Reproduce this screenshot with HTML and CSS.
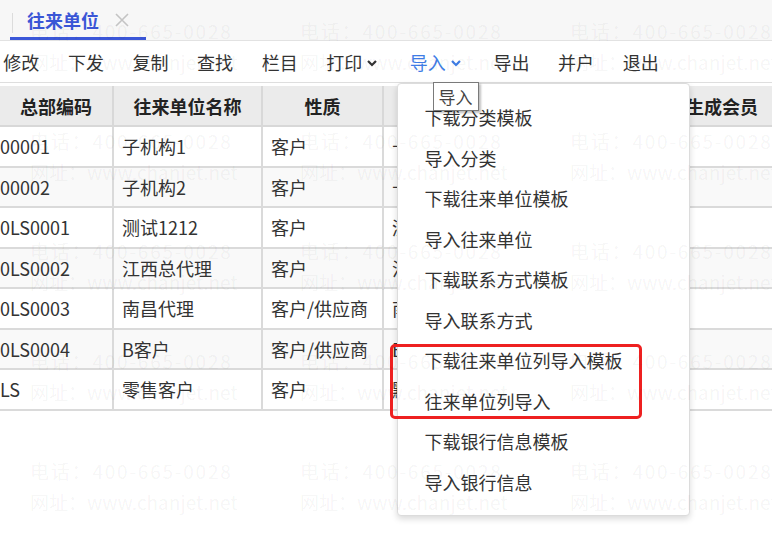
FILE: index.html
```html
<!DOCTYPE html>
<html lang="zh-CN">
<head>
    <meta charset="UTF-8">
    <title>往来单位</title>
    <link rel="stylesheet" href="styles.css">
</head>
<body>
    <div class="tabbar">
        <div class="tab">
            <span class="tab-title">往来单位</span>
            <svg class="tab-close" width="14" height="14" viewBox="0 0 14 14">
                <path d="M1 1 L13 13 M13 1 L1 13" stroke="#c4c4c4" stroke-width="1.6" fill="none"/>
            </svg>
        </div>
    </div>

    <div class="toolbar">
        <div class="tool first">修改</div>
        <div class="tool">下发</div>
        <div class="tool">复制</div>
        <div class="tool">查找</div>
        <div class="tool">栏目</div>
        <div class="tool">打印
            <svg class="chevron" width="12" height="8" viewBox="0 0 12 8">
                <polyline points="2,2 6,6 10,2" stroke="#333" stroke-width="2.2" fill="none"/>
            </svg>
        </div>
        <div class="tool active">导入
            <svg class="chevron" width="12" height="8" viewBox="0 0 12 8">
                <polyline points="2,2 6,6 10,2" stroke="#3f7de6" stroke-width="2.2" fill="none"/>
            </svg>
            <div class="tooltip">导入</div>
            <!-- import dropdown -->
            <div class="menu">
                <div class="menu-item">下载分类模板</div>
                <div class="menu-item">导入分类</div>
                <div class="menu-item">下载往来单位模板</div>
                <div class="menu-item">导入往来单位</div>
                <div class="menu-item">下载联系方式模板</div>
                <div class="menu-item">导入联系方式</div>
                <div class="menu-item">下载往来单位列导入模板</div>
                <div class="menu-item">往来单位列导入</div>
                <div class="menu-item">下载银行信息模板</div>
                <div class="menu-item">导入银行信息</div>
                <div class="highlight"></div>
            </div>
        </div>
        <div class="tool">导出</div>
        <div class="tool">并户</div>
        <div class="tool">退出</div>
    </div>

    <div class="grid-wrap">
        <table class="grid">
            <colgroup>
                <col class="c1"><col class="c2"><col class="c3"><col class="c4"><col class="c5">
            </colgroup>
            <thead>
                <tr>
                    <th>总部编码</th>
                    <th>往来单位名称</th>
                    <th>性质</th>
                    <th>所属分类</th>
                    <th>是否生成会员</th>
                </tr>
            </thead>
            <tbody>
                <tr><td class="code">00001</td><td>子机构1</td><td>客户</td><td>十堰</td><td></td></tr>
                <tr><td class="code">00002</td><td>子机构2</td><td>客户</td><td>十堰</td><td></td></tr>
                <tr><td class="code">0LS0001</td><td>测试1212</td><td>客户</td><td>浙江</td><td></td></tr>
                <tr><td class="code">0LS0002</td><td>江西总代理</td><td>客户</td><td>江西</td><td></td></tr>
                <tr><td class="code">0LS0003</td><td>南昌代理</td><td>客户/供应商</td><td>南昌</td><td></td></tr>
                <tr><td class="code">0LS0004</td><td>B客户</td><td>客户/供应商</td><td>B类</td><td></td></tr>
                <tr><td class="code">LS</td><td>零售客户</td><td>客户</td><td>默认</td><td></td></tr>
            </tbody>
        </table>
    </div>

    <div class="watermark">
        <div class="wm"><span class="phone">电话：400-665-0028</span><span>网址：www.chanjet.net</span></div>
        <div class="wm"><span class="phone">电话：400-665-0028</span><span>网址：www.chanjet.net</span></div>
        <div class="wm"><span class="phone">电话：400-665-0028</span><span>网址：www.chanjet.net</span></div>
        <div class="wm"><span class="phone">电话：400-665-0028</span><span>网址：www.chanjet.net</span></div>
        <div class="wm"><span class="phone">电话：400-665-0028</span><span>网址：www.chanjet.net</span></div>
        <div class="wm"><span class="phone">电话：400-665-0028</span><span>网址：www.chanjet.net</span></div>
        <div class="wm"><span class="phone">电话：400-665-0028</span><span>网址：www.chanjet.net</span></div>
        <div class="wm"><span class="phone">电话：400-665-0028</span><span>网址：www.chanjet.net</span></div>
        <div class="wm"><span class="phone">电话：400-665-0028</span><span>网址：www.chanjet.net</span></div>
        <div class="wm"><span class="phone">电话：400-665-0028</span><span>网址：www.chanjet.net</span></div>
        <div class="wm"><span class="phone">电话：400-665-0028</span><span>网址：www.chanjet.net</span></div>
        <div class="wm"><span class="phone">电话：400-665-0028</span><span>网址：www.chanjet.net</span></div>
        <div class="wm"><span class="phone">电话：400-665-0028</span><span>网址：www.chanjet.net</span></div>
        <div class="wm"><span class="phone">电话：400-665-0028</span><span>网址：www.chanjet.net</span></div>
        <div class="wm"><span class="phone">电话：400-665-0028</span><span>网址：www.chanjet.net</span></div>
    </div>
</body>
</html>
```

FILE: styles.css
```css
* {
    margin: 0;
    padding: 0;
    box-sizing: border-box;
}

body {
    font-family: "Noto Sans CJK SC", "Noto Sans", sans-serif;
    color: #333;
    background: #fff;
    width: 772px;
    height: 538px;
    overflow: hidden;
    position: relative;
}

/* Tab bar */
.tabbar {
    height: 41px;
    background: #f7f7f7;
    border-bottom: 1px solid #e2e2e2;
    padding-left: 10px;
    display: flex;
}

.tab {
    position: relative;
    display: flex;
    align-items: center;
    gap: 16px;
    padding: 3px 17px 0 17px;
    height: 40px;
    border-bottom: 3px solid #3b57d8;
}

.tab::before {
    content: "";
    position: absolute;
    left: 2px;
    top: 13px;
    width: 1px;
    height: 20px;
    background: #dcdcdc;
}

.tab-title {
    font-size: 18px;
    font-weight: bold;
    color: #3a56d6;
    line-height: 1;
}

/* Toolbar */
.toolbar {
    height: 42px;
    border-bottom: 1px solid #dedede;
    display: flex;
    align-items: stretch;
    background: #fff;
}

.tool {
    position: relative;
    display: flex;
    align-items: center;
    padding: 0 14.3px;
    font-size: 18px;
    color: #333;
    white-space: nowrap;
}

.tool.first {
    margin-left: -11px;
}

.tool.active {
    color: #3f7de6;
}

.chevron {
    margin: 2px 3px 0 4px;
}

.tooltip {
    position: absolute;
    left: 37px;
    top: 41px;
    z-index: 3;
    background: #fff;
    border: 1px solid #7a7a7a;
    box-shadow: 2px 2px 2px rgba(0, 0, 0, 0.25);
    color: #444;
    font-size: 17px;
    line-height: 27px;
    padding: 0 5px;
}

/* Dropdown menu */
.menu {
    position: absolute;
    left: 1px;
    top: 42px;
    z-index: 2;
    width: 293px;
    height: 433px;
    background: #fff;
    border: 1px solid #dcdcdc;
    border-radius: 4px;
    box-shadow: 0 3px 6px rgba(0, 0, 0, 0.15);
    padding-top: 13px;
}

.menu-item {
    height: 40.5px;
    line-height: 40.5px;
    padding-left: 27px;
    font-size: 18px;
    color: #333;
}

.highlight {
    position: absolute;
    left: -8px;
    top: 260px;
    width: 252px;
    height: 75px;
    border: 3px solid #ee2020;
    border-radius: 5px;
}

/* Table */
.grid-wrap {
    margin-top: 3px;
    overflow: hidden;
}

.grid {
    border-collapse: collapse;
    table-layout: fixed;
    width: 825px;
    font-size: 18px;
}

.c1 { width: 113px; }
.c2 { width: 149px; }
.c3 { width: 121px; }
.c4 { width: 200px; }
.c5 { width: 242px; }

.grid th {
    height: 40px;
    background: #ebebeb;
    border: 2px solid #d8d8d8;
    border-top: none;
    font-weight: bold;
    color: #222;
    text-align: center;
}

.grid td {
    height: 40.5px;
    border: 2px solid #dadada;
    padding-left: 8px;
    white-space: nowrap;
    overflow: hidden;
}

.grid td.code {
    padding-left: 0;
}

.grid th:first-child,
.grid td:first-child {
    border-left: none;
}

.grid tbody tr:nth-child(even) td {
    background: #f9f9f9;
}

/* Watermark */
.watermark {
    position: absolute;
    left: 0;
    top: 0;
    width: 840px;
    height: 560px;
    z-index: 5;
    pointer-events: none;
    padding: 15px 0 0 30px;
    display: grid;
    grid-template-columns: repeat(3, 270px);
    grid-auto-rows: 110px;
}

.wm {
    display: flex;
    flex-direction: column;
    font-size: 19px;
    line-height: 31px;
    color: rgba(0, 0, 0, 0.05);
    white-space: nowrap;
}

.wm .phone {
    letter-spacing: 1.8px;
}
```
